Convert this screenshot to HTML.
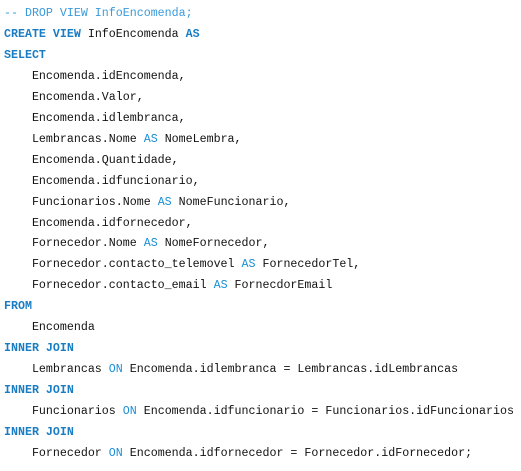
<!DOCTYPE html><html><head><style>
body{margin:0;background:#fff;width:521px;height:471px;overflow:hidden}
pre{margin:0;padding:4px 0 0 4px;font-family:"Liberation Mono",monospace;font-size:11.65px;line-height:20.95px;color:#111}
.k{color:#1a7dc4;font-weight:bold}.o{color:#1a8fd6}.c{color:#3a9ad9}
</style></head><body><pre><span class="c">-- DROP VIEW InfoEncomenda;</span>
<span class="k">CREATE VIEW</span> InfoEncomenda <span class="k">AS</span>
<span class="k">SELECT</span>
    Encomenda.idEncomenda,
    Encomenda.Valor,
    Encomenda.idlembranca,
    Lembrancas.Nome <span class="o">AS</span> NomeLembra,
    Encomenda.Quantidade,
    Encomenda.idfuncionario,
    Funcionarios.Nome <span class="o">AS</span> NomeFuncionario,
    Encomenda.idfornecedor,
    Fornecedor.Nome <span class="o">AS</span> NomeFornecedor,
    Fornecedor.contacto_telemovel <span class="o">AS</span> FornecedorTel,
    Fornecedor.contacto_email <span class="o">AS</span> FornecdorEmail
<span class="k">FROM</span>
    Encomenda
<span class="k">INNER JOIN</span>
    Lembrancas <span class="o">ON</span> Encomenda.idlembranca = Lembrancas.idLembrancas
<span class="k">INNER JOIN</span>
    Funcionarios <span class="o">ON</span> Encomenda.idfuncionario = Funcionarios.idFuncionarios
<span class="k">INNER JOIN</span>
    Fornecedor <span class="o">ON</span> Encomenda.idfornecedor = Fornecedor.idFornecedor;</pre></body></html>
